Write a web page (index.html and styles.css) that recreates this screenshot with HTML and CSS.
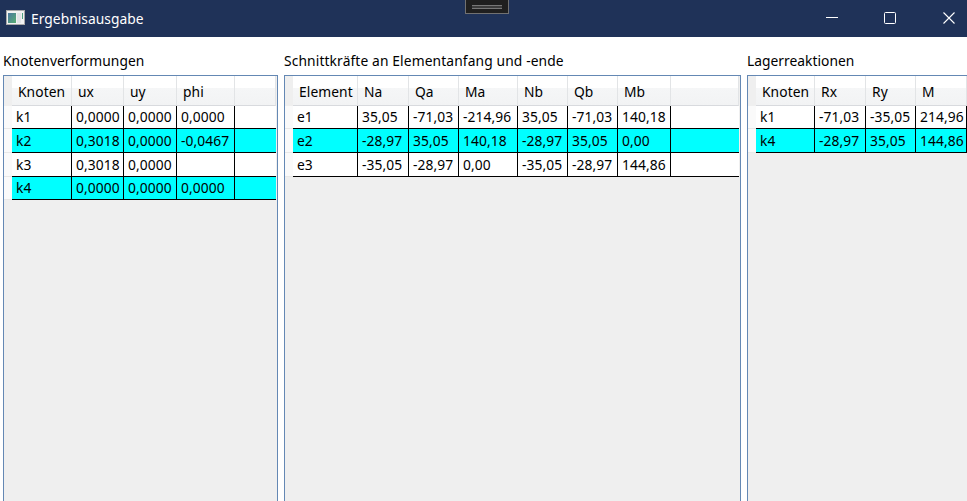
FILE: index.html
```html
<!DOCTYPE html>
<html lang="de">
<head>
<meta charset="utf-8">
<title>Ergebnisausgabe</title>
<link rel="stylesheet" href="styles.css">
</head>
<body>
<header class="titlebar">
  <svg class="app-icon" width="19" height="16" viewBox="0 0 19 16">
    <defs><linearGradient id="pane" x1="0" y1="0" x2="1" y2="1"><stop offset="0" stop-color="#4c78a0"/><stop offset="1" stop-color="#58ae72"/></linearGradient></defs>
    <rect x=".5" y=".5" width="18" height="14" fill="#f2f2f2" stroke="#a9a9a9"/>
    <rect x="2" y="3" width="8" height="10" fill="url(#pane)"/>
    <rect x="11" y="3" width="4" height="10" fill="#e2e4e6"/>
    <rect x="16" y="3" width="1" height="6" fill="#4fa080"/>
  </svg>
  <h1 class="title">Ergebnisausgabe</h1>
  <div class="debug-tab"><span class="grip"></span></div>
  <div class="controls">
    <svg width="12" height="12" viewBox="0 0 12 12"><path d="M0 5.5H12" stroke="#fff"/></svg>
    <svg width="12" height="12" viewBox="0 0 12 12"><rect x=".5" y=".5" width="11" height="11" rx="1" fill="none" stroke="#fff"/></svg>
    <svg width="12" height="12" viewBox="0 0 12 12"><path d="M.5 .5L11.5 11.5M11.5 .5L.5 11.5" stroke="#fff" stroke-width="1.1"/></svg>
  </div>
</header>
<main class="content">
  <section class="panel nodes">
    <h2>Knotenverformungen</h2>
    <div class="grid">
      <div class="row head"><i></i><b>Knoten</b><b>ux</b><b>uy</b><b>phi</b><b></b></div>
      <div class="row"><i></i><span>k1</span><span>0,0000</span><span>0,0000</span><span>0,0000</span><span></span></div>
      <div class="row alt"><i></i><span>k2</span><span>0,3018</span><span>0,0000</span><span>-0,0467</span><span></span></div>
      <div class="row"><i></i><span>k3</span><span>0,3018</span><span>0,0000</span><span></span><span></span></div>
      <div class="row alt short"><i></i><span>k4</span><span>0,0000</span><span>0,0000</span><span>0,0000</span><span></span></div>
    </div>
  </section>
  <section class="panel forces">
    <h2>Schnittkräfte an Elementanfang und -ende</h2>
    <div class="grid">
      <div class="row head"><i></i><b>Element</b><b>Na</b><b>Qa</b><b>Ma</b><b>Nb</b><b>Qb</b><b>Mb</b><b></b></div>
      <div class="row"><i></i><span>e1</span><span>35,05</span><span>-71,03</span><span>-214,96</span><span>35,05</span><span>-71,03</span><span>140,18</span><span></span></div>
      <div class="row alt"><i></i><span>e2</span><span>-28,97</span><span>35,05</span><span>140,18</span><span>-28,97</span><span>35,05</span><span>0,00</span><span></span></div>
      <div class="row"><i></i><span>e3</span><span>-35,05</span><span>-28,97</span><span>0,00</span><span>-35,05</span><span>-28,97</span><span>144,86</span><span></span></div>
    </div>
  </section>
  <section class="panel supports">
    <h2>Lagerreaktionen</h2>
    <div class="grid">
      <div class="row head"><i></i><b>Knoten</b><b>Rx</b><b>Ry</b><b>M</b></div>
      <div class="row"><i></i><span>k1</span><span>-71,03</span><span>-35,05</span><span>214,96</span></div>
      <div class="row alt"><i></i><span>k4</span><span>-28,97</span><span>35,05</span><span>144,86</span></div>
    </div>
  </section>
</main>
</body>
</html>
```
FILE: styles.css
```css
* { box-sizing: border-box; }
body {
  margin: 0;
  height: 501px;
  overflow: hidden;
  display: flex;
  flex-direction: column;
  background: #fff;
  color: #000;
  font: 13.8px/20px "Noto Sans", "Open Sans", sans-serif;
}
h1, h2, b { margin: 0; font-size: inherit; font-weight: 400; }
i { display: block; }
.titlebar {
  position: relative;
  flex: none;
  display: flex;
  align-items: center;
  height: 37px;
  padding: 0 12px 0 6px;
  background: #1f3258;
  color: #fff;
}
.app-icon { margin: -1px 6px 0 0; }
.title { letter-spacing: .04px; }
.debug-tab {
  position: absolute;
  left: 465px;
  top: 0;
  width: 44px;
  height: 14px;
  padding: 5px 6px 0;
  background: #1f1f1f;
  border: 1px solid #717171;
  border-top: 0;
}
.grip {
  display: block;
  height: 4px;
  background: #3c3c3c;
  border-top: 1px solid #777;
  border-bottom: 1px solid #777;
}
.controls { display: flex; gap: 47px; margin: -1px 0 0 auto; }
.controls svg { display: block; }
.controls svg:first-child { margin-right: -1px; }
.content {
  flex: 1;
  display: flex;
  gap: 6px;
  padding: 14px 0 0 3px;
}
.panel { flex: none; display: flex; flex-direction: column; }
.panel h2 { height: 24px; white-space: nowrap; letter-spacing: .03px; }
.forces h2 { letter-spacing: .12px; }
.nodes { width: 275px; }
.forces { width: 457px; }
.supports { width: 240px; }
.grid {
  flex: 1;
  background: #efefef;
  border: 1px solid #6488b4;
  border-bottom: 0;
  overflow: hidden;
}
.row { display: grid; height: 24px; }
.nodes .row { grid-template-columns: 8px 60px 52px 53px 58px 41px; }
.forces .row { grid-template-columns: 8px 65px 51px 50px 59px 50px 50px 53px 68px; }
.supports .row { grid-template-columns: 8px 59px 51px 50px 51px; }
.row i { background: #fafafa; border-bottom: 1px solid #e8e8e8; }
.row span {
  padding-left: 4px;
  background: #fff;
  border-right: 1px solid #000;
  border-bottom: 1px solid #000;
  line-height: 23px;
  letter-spacing: .08px;
  white-space: nowrap;
}
.row.alt span { background: #0ff; }
.nodes .row span:last-child, .forces .row span:last-child { border-right: 0; }
.row.head { height: 30px; }
.head i { background: #efefef; border: 0; }
.head b {
  padding-left: 6px;
  line-height: 29px;
  padding-top: 1px;
  letter-spacing: .08px;
  background: linear-gradient(#fff 0 40%, #f5f6f7 42%, #f2f3f4);
  border-right: 1px solid #e2e4e6;
  border-bottom: 1px solid #d8dade;
  height: 30px;
}
.head + .row, .row.short { height: 23px; }
.head + .row span, .row.short span { line-height: 22px; }
```
